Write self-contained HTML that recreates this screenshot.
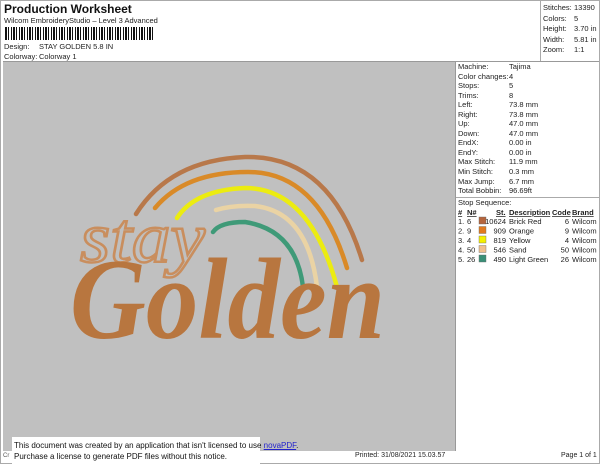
<!DOCTYPE html>
<html><head><meta charset="utf-8"><style>
*{margin:0;padding:0;box-sizing:border-box}
body{width:600px;height:464px;background:#fff;font-family:"Liberation Sans",sans-serif;font-size:7.5px;color:#222;position:relative;overflow:hidden}
.a{position:absolute;white-space:nowrap}
</style></head><body>
<div class="a" style="left:0;top:0;width:600px;height:464px;border:1px solid #aaa"></div>
<div class="a" style="left:4px;top:2px;font-size:12px;font-weight:bold;color:#111">Production Worksheet</div>
<div class="a" style="left:4px;top:16px">Wilcom EmbroideryStudio – Level 3 Advanced</div>
<div class="a" style="left:5px;top:27px;width:150px;height:13px;background:repeating-linear-gradient(90deg,#111 0 2px,#fff 2px 3px,#111 3px 4px,#fff 4px 6px,#111 6px 7px,#fff 7px 8px)"></div>
<div class="a" style="left:4px;top:42px">Design:</div><div class="a" style="left:39px;top:42px">STAY GOLDEN 5.8 IN</div>
<div class="a" style="left:4px;top:52px">Colorway:</div><div class="a" style="left:39px;top:52px">Colorway 1</div>
<div class="a" style="left:540px;top:0;width:59px;height:61px;border-left:1px solid #aaa"></div>
<div class="a" style="left:543px;top:3px;line-height:10.5px">Stitches:<br>Colors:<br>Height:<br>Width:<br>Zoom:</div>
<div class="a" style="left:574px;top:3px;line-height:10.5px">13390<br>5<br>3.70 in<br>5.81 in<br>1:1</div>
<div class="a" style="left:3px;top:61px;width:596px;border-top:1px solid #999"></div>
<div class="a" style="left:3px;top:62px;width:452px;height:389px;background:#c0c0c0"></div>
<div class="a" style="left:455px;top:62px;width:1px;height:389px;background:#999"></div>
<div class="a" style="left:458px;top:62px;line-height:9.55px">Machine:<br>Color changes:<br>Stops:<br>Trims:<br>Left:<br>Right:<br>Up:<br>Down:<br>EndX:<br>EndY:<br>Max Stitch:<br>Min Stitch:<br>Max Jump:<br>Total Bobbin:</div>
<div class="a" style="left:509px;top:62px;line-height:9.55px">Tajima<br>4<br>5<br>8<br>73.8 mm<br>73.8 mm<br>47.0 mm<br>47.0 mm<br>0.00 in<br>0.00 in<br>11.9 mm<br>0.3 mm<br>6.7 mm<br>96.69ft</div>
<div class="a" style="left:456px;top:197px;width:143px;border-top:1px solid #aaa"></div>
<div class="a" style="left:458px;top:198px">Stop Sequence:</div>
<svg class="a" style="left:0;top:0" width="600" height="464">
<g font-family="Liberation Sans" font-size="7.5" fill="#222">
<text x="458" y="215" font-weight="bold" text-decoration="underline">#</text>
<text x="467" y="215" font-weight="bold" text-decoration="underline">N#</text>
<text x="496" y="215" font-weight="bold" text-decoration="underline">St.</text>
<text x="509" y="215" font-weight="bold" text-decoration="underline">Description</text>
<text x="552" y="215" font-weight="bold" text-decoration="underline">Code</text>
<text x="572" y="215" font-weight="bold" text-decoration="underline">Brand</text>
<text x="458" y="224">1.</text><text x="467" y="224">6</text><rect x="479" y="217" width="7" height="7" fill="#b5653d" stroke="#666" stroke-width=".4"/><text x="506" y="224" text-anchor="end">10624</text><text x="509" y="224">Brick Red</text><text x="569" y="224" text-anchor="end">6</text><text x="572" y="224">Wilcom</text>
<text x="458" y="233.5">2.</text><text x="467" y="233.5">9</text><rect x="479" y="226.5" width="7" height="7" fill="#e27a1e" stroke="#666" stroke-width=".4"/><text x="506" y="233.5" text-anchor="end">909</text><text x="509" y="233.5">Orange</text><text x="569" y="233.5" text-anchor="end">9</text><text x="572" y="233.5">Wilcom</text>
<text x="458" y="243">3.</text><text x="467" y="243">4</text><rect x="479" y="236" width="7" height="7" fill="#f4f000" stroke="#666" stroke-width=".4"/><text x="506" y="243" text-anchor="end">819</text><text x="509" y="243">Yellow</text><text x="569" y="243" text-anchor="end">4</text><text x="572" y="243">Wilcom</text>
<text x="458" y="252.5">4.</text><text x="467" y="252.5">50</text><rect x="479" y="245.5" width="7" height="7" fill="#f0c08e" stroke="#666" stroke-width=".4"/><text x="506" y="252.5" text-anchor="end">546</text><text x="509" y="252.5">Sand</text><text x="569" y="252.5" text-anchor="end">50</text><text x="572" y="252.5">Wilcom</text>
<text x="458" y="262">5.</text><text x="467" y="262">26</text><rect x="479" y="255" width="7" height="7" fill="#3a8f77" stroke="#666" stroke-width=".4"/><text x="506" y="262" text-anchor="end">490</text><text x="509" y="262">Light Green</text><text x="569" y="262" text-anchor="end">26</text><text x="572" y="262">Wilcom</text>
</g>
<g fill="none" stroke-linecap="round">
<path d="M136,214 Q170,160 245,157 Q330,155 362,260" stroke="#b8784a" stroke-width="4.5"/>
<path d="M155,208 Q185,172 248,172 Q318,172 347,268" stroke="#d98a28" stroke-width="4.5"/>
<path d="M177,218 Q195,190 245,188 Q310,188 337,287" stroke="#ecec10" stroke-width="4.5"/>
<path d="M216,210 Q232,205 255,206 Q308,212 317,287" stroke="#ead3a4" stroke-width="4.5"/>
<path d="M213,232 Q220,222 245,222 Q296,230 303,287" stroke="#3f9a78" stroke-width="4.5"/>
</g>
<text x="80" y="262" font-family="Liberation Serif" font-style="italic" font-size="72" fill="none" stroke="#c98e5e" stroke-width="2.5" textLength="125" lengthAdjust="spacingAndGlyphs">stay</text>
<text x="70" y="338" font-family="Liberation Serif" font-style="italic" font-weight="bold" font-size="115" fill="#b8763f" textLength="315" lengthAdjust="spacingAndGlyphs">Golden</text>
</svg>
<div class="a" style="left:3px;top:453px;font-size:6px;color:#555">Cr</div>
<div class="a" style="left:12px;top:437px;width:248px;height:27px;background:#fff"></div>
<div class="a" style="left:14px;top:440px;font-size:8px;line-height:11px;color:#111">This document was created by an application that isn't licensed to use <span style="color:#22c;text-decoration:underline">novaPDF</span>.<br>Purchase a license to generate PDF files without this notice.</div>
<div class="a" style="left:355px;top:452px;font-size:7px">Printed: 31/08/2021 15.03.57</div>
<div class="a" style="left:561px;top:452px;font-size:7px">Page 1 of 1</div>
</body></html>
